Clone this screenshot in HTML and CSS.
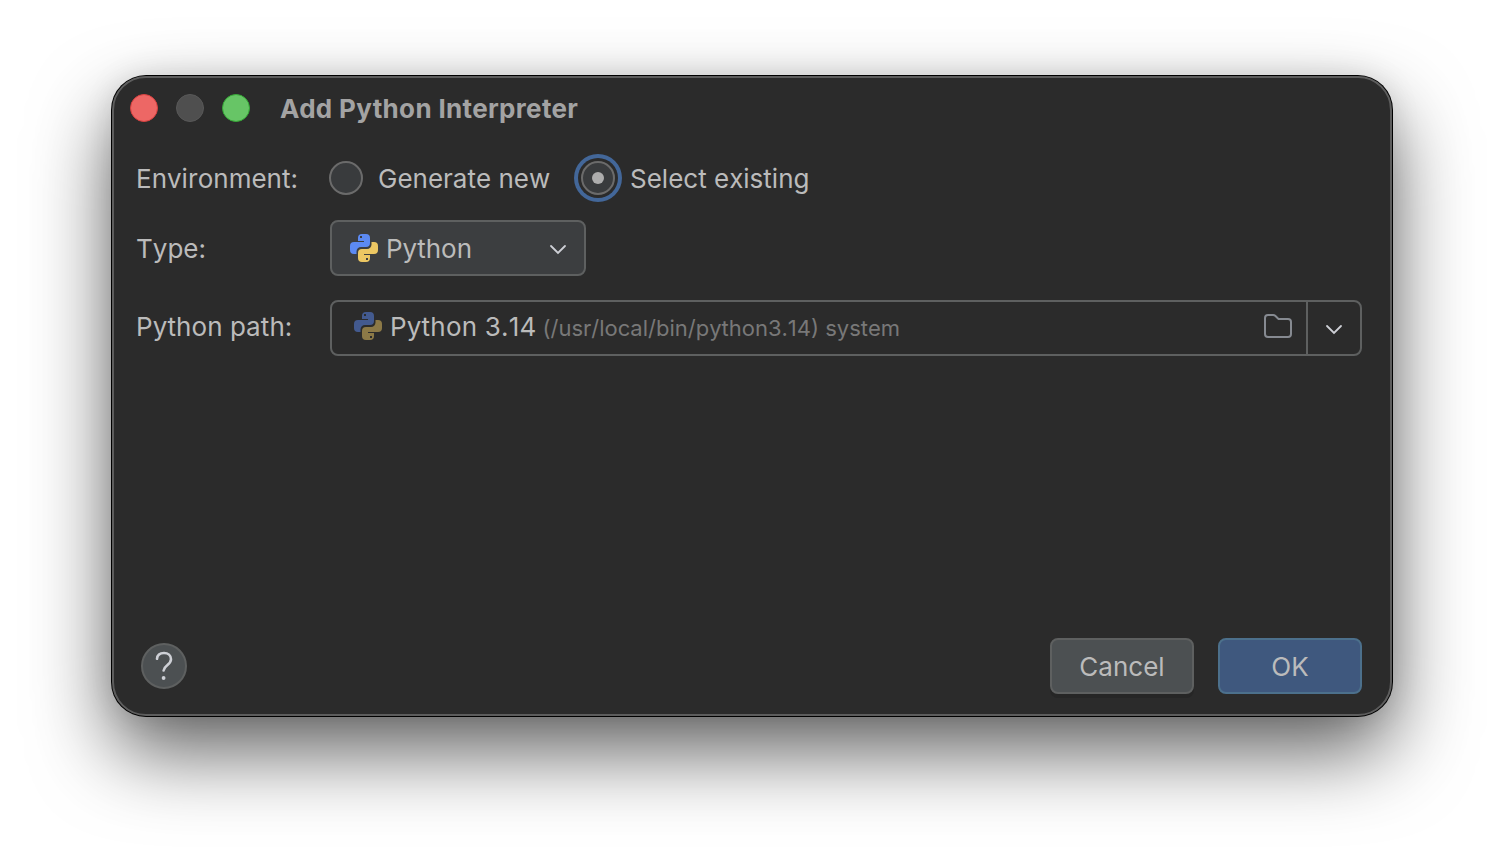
FILE: index.html
```html
<!DOCTYPE html>
<html lang="en">
<head>
    <meta charset="UTF-8">
    <meta name="viewport" content="width=device-width, initial-scale=1.0">
    <title>Add Python Interpreter</title>
    <link rel="stylesheet" href="styles.css">
</head>
<body>

<svg class="symbols" width="0" height="0">
    <symbol id="python" viewBox="0 0 28 28">
        <path class="snake-blue" fill-rule="evenodd" d="M8 4a4 4 0 0 1 4-4h4a4 4 0 0 1 4 4v5a4 4 0 0 1-4 4h-5a4.500 4.500 0 0 0-4.500 4.500V20H4a4 4 0 0 1-4-4v-4a4 4 0 0 1 4-4h10V7H8zM10 2v2h2V2z"/>
        <path class="snake-yellow" fill-rule="evenodd" transform="rotate(180 14 14)" d="M8 4a4 4 0 0 1 4-4h4a4 4 0 0 1 4 4v5a4 4 0 0 1-4 4h-5a4.500 4.500 0 0 0-4.500 4.500V20H4a4 4 0 0 1-4-4v-4a4 4 0 0 1 4-4h10V7H8zM10 2v2h2V2z"/>
    </symbol>
    <symbol id="chevron" viewBox="0 0 18 12">
        <path d="M2 2l7 7 7-7" fill="none" stroke="#ced0d6" stroke-width="1.800" stroke-linecap="round"/>
    </symbol>
</svg>

<div class="dialog">
    <div class="titlebar">
        <span class="light close"></span>
        <span class="light minimize"></span>
        <span class="light zoom"></span>
        <strong class="title">Add Python Interpreter</strong>
    </div>

    <div class="form">
        <div class="row row-environment">
            <span class="label">Environment:</span>
            <span class="radio"></span>
            <span class="radio-text">Generate new</span>
            <span class="radio selected"></span>
            <span class="radio-text">Select existing</span>
        </div>
        <div class="row row-type">
            <span class="label">Type:</span>
            <div class="combo">
                <svg class="python-icon"><use href="#python"/></svg>
                <span class="combo-text">Python</span>
                <svg class="chevron"><use href="#chevron"/></svg>
            </div>
        </div>
        <div class="row row-path">
            <span class="label">Python path:</span>
            <div class="path-field">
                <svg class="python-icon dimmed"><use href="#python"/></svg>
                <span class="version">Python 3.14</span>
                <span class="details">(/usr/local/bin/python3.14) system</span>
                <svg class="folder" viewBox="0 0 28 24">
                    <path d="M1 4a3 3 0 0 1 3-3h5.200a3 3 0 0 1 2 .8L14.500 5H24a3 3 0 0 1 3 3v12a3 3 0 0 1-3 3H4a3 3 0 0 1-3-3z" fill="none" stroke="#868a91" stroke-width="2"/>
                </svg>
                <div class="path-arrow">
                    <svg class="chevron"><use href="#chevron"/></svg>
                </div>
            </div>
        </div>
    </div>

    <div class="footer">
        <div class="help">
            <svg width="18" height="30" viewBox="0 0 18 30">
                <path d="M2 7.800C2.300 4.200 5 2 9 2s7 2.400 7 6.200c0 2.600-1.300 4-3.800 6.100C9.800 16.200 8.800 17.300 8.600 19.500" fill="none" stroke="#ced0d6" stroke-width="2.600" stroke-linecap="round"/>
                <circle cx="8.600" cy="27" r="1.900" fill="#ced0d6"/>
            </svg>
        </div>
        <div class="button cancel">Cancel</div>
        <div class="button ok">OK</div>
    </div>
</div>

</body>
</html>
```
FILE: styles.css
```css
* {
    box-sizing: border-box;
}
body {
    margin: 0;
    height: 864px;
    padding: 76px 112px;
    background-color: #fff;
    font-family: Inter, sans-serif;
    font-size: 26px;
    line-height: 32px;
    color: #bbb;
    overflow: hidden;
}
.symbols {
    display: block;
}
.dialog {
    display: flex;
    flex-direction: column;
    width: 1280px;
    height: 640px;
    border: 2px solid #5d5d5d;
    border-radius: 34px;
    background-color: #2b2b2b;
    box-shadow: 0 0 0 1px #000, 0 36px 80px rgba(0, 0, 0, 0.62), 0 0 30px rgba(0, 0, 0, 0.1);
    white-space: nowrap;
}

/* Title bar */
.titlebar {
    display: flex;
    align-items: center;
    height: 60px;
    padding-left: 16px;
}
.light {
    width: 28px;
    height: 28px;
    margin-right: 18px;
    border-radius: 50%;
}
.close {
    background-color: #ed6765;
    border: 1px solid #d9403f;
}
.minimize {
    background-color: #4f4f4f;
    border: 1px solid #585858;
}
.zoom {
    background-color: #67c566;
    border: 1px solid #35a936;
}
.title {
    margin: 2px 0 0 12px;
    font-weight: 700;
    letter-spacing: 0.33px;
    color: #a3a3a3;
}

/* Form rows */
.form {
    flex: 1;
    padding: 16px 28px 0 22px;
    font-kerning: none;
}
.row {
    display: flex;
    align-items: center;
}
.row-environment {
    height: 48px;
}
.row-type {
    margin-top: 18px;
}
.row-path {
    margin-top: 24px;
}
.label {
    width: 194px;
    padding-top: 2px;
}
.row-path .label {
    padding: 0 0 2px;
    letter-spacing: 0.1px;
}
.radio {
    display: flex;
    align-items: center;
    justify-content: center;
    width: 34px;
    height: 34px;
    margin-left: -1px;
    border: 2px solid #6b6b6b;
    border-radius: 50%;
    background-color: #393b3d;
}
.radio-text {
    width: 173px;
    margin-left: 15px;
    padding-top: 2px;
}
.radio.selected {
    margin-left: 30px;
    box-shadow: 0 0 0 3px #2b2b2b, 0 0 0 7px #436799;
}
.radio.selected::after {
    content: "";
    width: 12px;
    height: 12px;
    border-radius: 50%;
    background-color: #adadad;
}
.combo {
    display: flex;
    align-items: center;
    width: 256px;
    height: 56px;
    padding: 0 17px 0 18px;
    border: 2px solid #5e6060;
    border-radius: 8px;
    background-color: #3c3e40;
}
.python-icon {
    width: 28px;
    height: 28px;
}
.snake-blue {
    fill: #5c8af2;
}
.snake-yellow {
    fill: #ecc763;
}
.dimmed {
    opacity: 0.5;
    margin-top: -4px;
}
.combo-text {
    flex: 1;
    margin-left: 8px;
    padding-top: 2px;
}
.chevron {
    width: 18px;
    height: 12px;
    margin-top: 4px;
}
.path-field {
    display: flex;
    align-items: center;
    flex: 1;
    height: 56px;
    padding-left: 22px;
    border: 2px solid #5e6060;
    border-radius: 8px;
}
.version {
    margin: -3px 0 0 8px;
    letter-spacing: 0.2px;
}
.details {
    flex: 1;
    margin-left: 6px;
    font-size: 22px;
    color: #787878;
}
.folder {
    width: 28px;
    height: 24px;
    margin: -4px 14px 0 0;
}
.path-arrow {
    display: flex;
    align-items: center;
    justify-content: center;
    width: 54px;
    height: 52px;
    border-left: 2px solid #5e6060;
}

/* Bottom buttons */
.footer {
    display: flex;
    align-items: center;
    padding: 0 28px 20px 27px;
}
.help {
    display: flex;
    align-items: center;
    justify-content: center;
    width: 46px;
    height: 46px;
    margin-right: auto;
    border: 2px solid #5e6060;
    border-radius: 50%;
    background-color: #4c5052;
}
.button {
    width: 144px;
    height: 56px;
    margin-left: 24px;
    border: 2px solid #5e6060;
    border-radius: 8px;
    line-height: 54px;
    text-align: center;
}
.cancel {
    background-color: #4c5052;
    box-shadow: 0 4px 0 #262626;
}
.ok {
    background-color: #3f587e;
    border-color: #4c708c;
}
```
